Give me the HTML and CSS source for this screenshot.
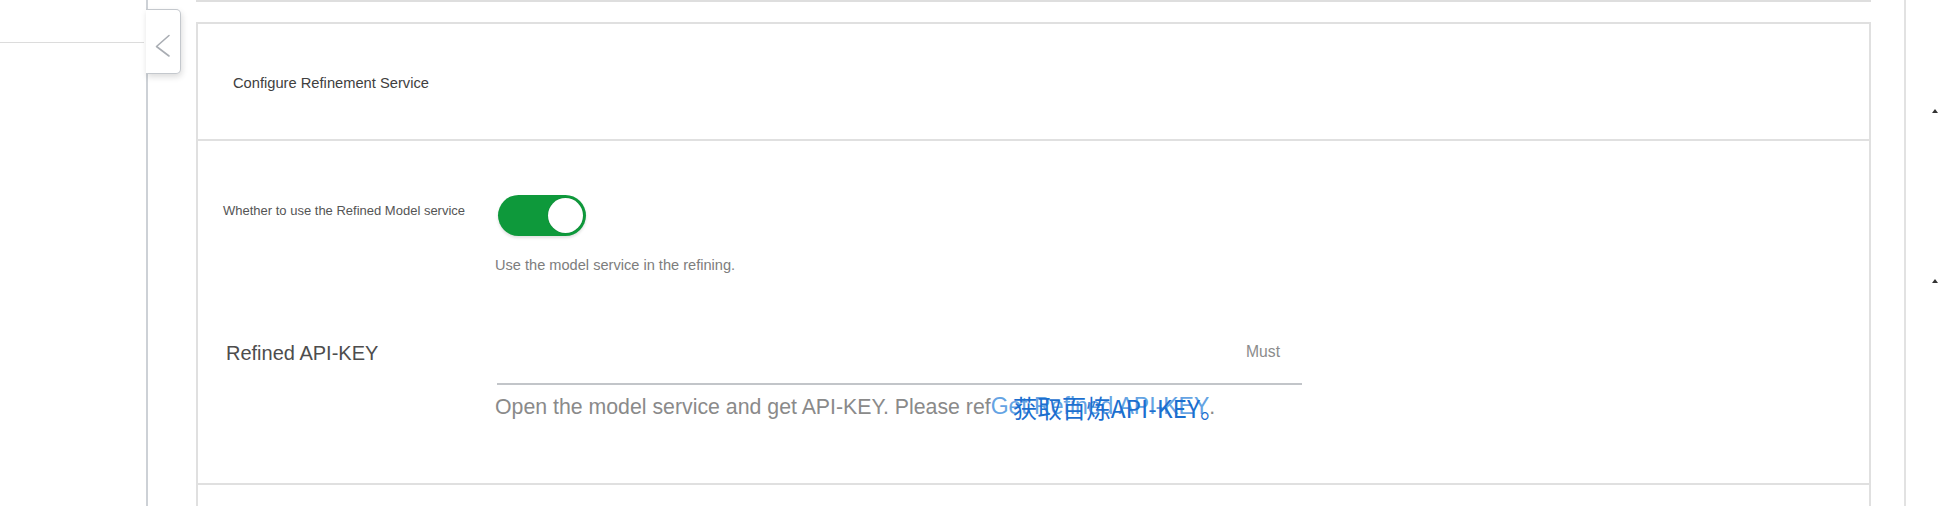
FILE: index.html
```html
<!DOCTYPE html>
<html lang="en">
<head>
<meta charset="utf-8">
<title>Configure Refinement Service</title>
<link rel="stylesheet" href="styles.css">
</head>
<body>
<div class="page">
  <aside class="sidebar">
    <div class="sidebar-head"></div>
  </aside>
  <button class="collapse-tab" aria-label="Collapse">
    <svg width="35" height="65" viewBox="0 0 35 65"><polyline points="24,26.5 11.5,37.5 24,47" fill="none" stroke="#a9adb3" stroke-width="1.6" stroke-linecap="round" stroke-linejoin="round"/></svg>
  </button>
  <main class="main">
    <div class="prev-card"></div>
    <section class="card">
      <header class="card-head">Configure Refinement Service</header>
      <div class="card-body">
        <div class="form-row row-toggle">
          <div class="label small">Whether to use the Refined Model service</div>
          <div class="control">
            <div class="switch"><span class="knob"></span></div>
            <div class="hint">Use the model service in the refining.</div>
          </div>
        </div>
        <div class="form-row row-key">
          <div class="label big">Refined API-KEY</div>
          <div class="control">
            <div class="input"><span class="placeholder">Must</span></div>
            <div class="hint big-hint">Open the model service and get API-KEY. Please ref<span class="link">Get Refined API-KEY<span class="zh">获取百炼API-KEY。</span></span>.</div>
          </div>
        </div>
      </div>
      <div class="card-next"></div>
    </section>
  </main>
  <aside class="rail">
    <span class="tri tri-1"></span>
    <span class="tri tri-2"></span>
  </aside>
</div>
</body>
</html>
```

FILE: styles.css
```css
* { box-sizing: border-box; }
html, body { margin: 0; padding: 0; background: #ffffff; }
body { font-family: "Liberation Sans", Arial, sans-serif; color: #333; }

.page {
  position: relative;
  display: flex;
  width: 1944px;
  height: 506px;
  overflow: hidden;
}

.sidebar {
  width: 148px;
  flex: none;
  border-right: 2px solid #cdd1d6;
}
.sidebar-head {
  height: 43px;
  margin-right: 2px;
  border-bottom: 1px solid #dcdcdc;
}

.collapse-tab {
  position: absolute;
  left: 146px;
  top: 9px;
  width: 35px;
  height: 65px;
  padding: 0;
  margin: 0;
  background: #fff;
  border: 1px solid #c4c8cd;
  border-left: none;
  border-radius: 0 5px 5px 0;
  box-shadow: 1px 3px 6px rgba(0, 0, 0, 0.14);
}
.collapse-tab svg { display: block; margin-left: -1px; margin-top: -1px; }

.main {
  flex: none;
  width: 1723px;
  padding-left: 48px;
}
.prev-card {
  height: 2px;
  background: #dedede;
  width: 1675px;
}
.card {
  margin-top: 20px;
  width: 1675px;
  border: 2px solid #e0e0e0;
  border-bottom: none;
}
.card-head {
  height: 117px;
  padding: 50px 0 0 35px;
  font-size: 14.7px;
  line-height: 18px;
  color: #404040;
  border-bottom: 2px solid #e0e0e0;
}
.card-body {
  padding: 54px 0 63px 25px;
  border-bottom: 2px solid #e0e0e0;
}
.card-next { height: 40px; }

.form-row { display: flex; }
.row-key { margin-top: 61px; }
.label {
  width: 272px;
  flex: none;
  color: #555;
}
.label.small { font-size: 13px; line-height: 16px; padding-top: 8px; }
.label.big { font-size: 20px; line-height: 24px; padding-top: 5px; color: #4d4d4d; padding-left: 3px; }

.control { display: flex; flex-direction: column; align-items: flex-start; }

.switch {
  position: relative;
  width: 88px;
  height: 41px;
  margin-left: 3px;
  border-radius: 21px;
  background: #0e993b;
  box-shadow: 0 2px 3px rgba(0, 0, 0, 0.12);
}
.knob {
  position: absolute;
  right: 3px;
  top: 3px;
  width: 35px;
  height: 35px;
  border-radius: 50%;
  background: #fff;
  box-shadow: 0 0 1px rgba(0, 0, 0, 0.3);
}

.hint {
  margin-top: 19px;
  font-size: 14.6px;
  line-height: 20px;
  color: #7d7d7d;
}

.input {
  width: 805px;
  height: 49px;
  margin-left: 2px;
  padding: 6px 22px 0 0;
  border-bottom: 2px solid #c2c5c9;
  text-align: right;
}
.placeholder { font-size: 15.7px; line-height: 20px; color: #8c8c8c; }

.big-hint {
  margin-top: 8px;
  font-size: 21.3px;
  line-height: 26px;
  color: #8a8a8a;
  white-space: nowrap;
}
.link {
  position: relative;
  font-size: 23px;
  color: #64a3e3;
}
.zh {
  position: absolute;
  left: 22px;
  top: 0;
  font-family: "Noto Sans CJK SC", "Liberation Sans", sans-serif;
  font-size: 24.5px;
  line-height: 30px;
  color: #1c6fcf;
  white-space: nowrap;
}

.rail {
  flex: none;
  width: 40px;
  margin-left: 33px;
  border-left: 2px solid #e2e2e2;
  position: relative;
}
.tri {
  position: absolute;
  left: 26px;
  width: 0;
  height: 0;
  border-left: 3.5px solid transparent;
  border-right: 3.5px solid transparent;
  border-bottom: 4px solid #333;
}
.tri-1 { top: 109px; }
.tri-2 { top: 279px; }
```
